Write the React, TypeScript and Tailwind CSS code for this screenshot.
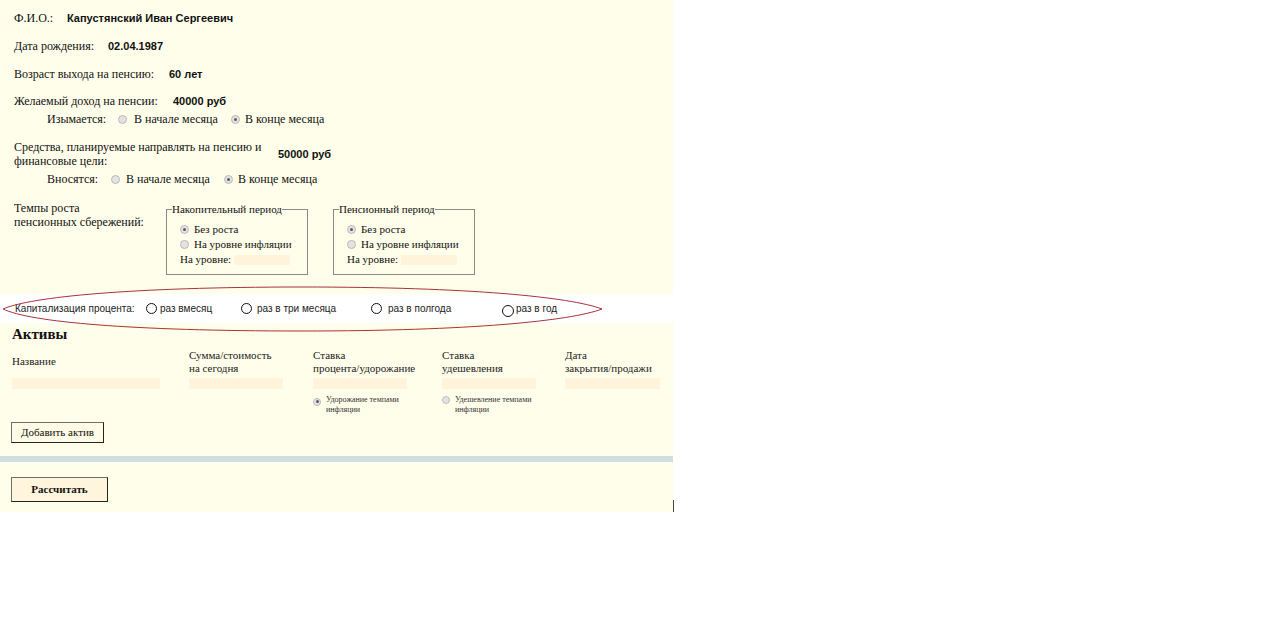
import React from "react";

const SERIF = "font-['Liberation_Serif','Times_New_Roman',serif]";
const SANS = "font-['Liberation_Sans',Arial,sans-serif]";

function Radio({ checked = false }: { checked?: boolean }) {
  return (
    <span className="inline-flex shrink-0 w-[9px] h-[9px] rounded-full border border-[#b9b9b9] bg-[#e3e3e3] items-center justify-center">
      {checked && <span className="w-[3px] h-[3px] rounded-full bg-[#5a5a5a]" />}
    </span>
  );
}

function SmallRadio({ checked = false }: { checked?: boolean }) {
  return (
    <span className="inline-flex shrink-0 w-[8px] h-[8px] rounded-full border border-[#bcbcbc] bg-[#e3e3e3] items-center justify-center">
      {checked && <span className="w-[3px] h-[3px] rounded-full bg-[#5a5a5a]" />}
    </span>
  );
}

function CapRadio({ big = false }: { big?: boolean }) {
  return big ? (
    <span className="shrink-0 w-[12px] h-[12px] mt-[4px] rounded-full border border-[#111] bg-white" />
  ) : (
    <span className="shrink-0 w-[11px] h-[11px] rounded-full border border-[#111] bg-white" />
  );
}

function Period({ title }: { title: string }) {
  return (
    <fieldset className="w-[142px] mt-[2px] border border-[#8a8a8a] pl-[5px] pb-[7px] text-[11px] leading-[13px]">
      <legend className="p-0">{title}</legend>
      <div className="ml-[8px] pt-[6px]">
        <div className="flex items-center h-[15px]">
          <Radio checked />
          <span className="ml-[5px]">Без роста</span>
        </div>
        <div className="flex items-center h-[15px]">
          <Radio />
          <span className="ml-[5px]">На уровне инфляции</span>
        </div>
        <div className="flex items-center h-[15px]">
          <span className="w-[54px]">На уровне:</span>
          <span className="w-[56px] h-[10px] bg-[#fff3dc]" />
        </div>
      </div>
    </fieldset>
  );
}

export default function App() {
  return (
    <div className={`relative w-[1280px] h-[632px] bg-white text-[#111] ${SERIF}`}>
      {/* top section */}
      <div className="w-[673px] h-[294px] bg-[#fffeea] pt-[10px] pl-[14px] text-[12px] leading-[15px]">
        <div className="flex items-center h-[16px]">
          <span className="w-[53px]">Ф.И.О.:</span>
          <span className={`${SANS} font-bold text-[11px]`}>Капустянский Иван Сергеевич</span>
        </div>
        <div className="flex items-center h-[16px] mt-[12px]">
          <span className="w-[94px]">Дата рождения:</span>
          <span className={`${SANS} font-bold text-[11px]`}>02.04.1987</span>
        </div>
        <div className="flex items-center h-[16px] mt-[12px]">
          <span className="w-[155px]">Возраст выхода на пенсию:</span>
          <span className={`${SANS} font-bold text-[11px]`}>60 лет</span>
        </div>
        <div className="flex items-center h-[16px] mt-[11px]">
          <span className="w-[159px]">Желаемый доход на пенсии:</span>
          <span className={`${SANS} font-bold text-[11px]`}>40000 руб</span>
        </div>
        <div className="flex items-center h-[16px] mt-[2px] pl-[33px]">
          <span className="w-[71px]">Изымается:</span>
          <Radio />
          <span className="ml-[7px] w-[97px]">В начале месяца</span>
          <Radio checked />
          <span className="ml-[5px]">В конце месяца</span>
        </div>
        <div className="flex items-center h-[28px] mt-[13px]">
          <span className="w-[264px] leading-[14px] whitespace-nowrap">
            Средства, планируемые направлять на пенсию и
            <br />
            финансовые цели:
          </span>
          <span className={`${SANS} font-bold text-[11px]`}>50000 руб</span>
        </div>
        <div className="flex items-center h-[16px] mt-[3px] pl-[33px]">
          <span className="w-[64px]">Вносятся:</span>
          <Radio />
          <span className="ml-[6px] w-[98px]">В начале месяца</span>
          <Radio checked />
          <span className="ml-[5px]">В конце месяца</span>
        </div>
        <div className="flex items-start mt-[14px]">
          <span className="w-[152px] leading-[14px]">
            Темпы роста
            <br />
            пенсионных сбережений:
          </span>
          <Period title="Накопительный период" />
          <div className="w-[25px]" />
          <Period title="Пенсионный период" />
        </div>
      </div>

      {/* capitalization strip */}
      <div className={`flex items-center h-[29px] w-[680px] bg-white pl-[15px] text-[10px] text-[#222] ${SANS}`}>
        <span className="w-[131px]">Капитализация процента:</span>
        <CapRadio />
        <span className="ml-[3px] w-[81px]">раз вмесяц</span>
        <CapRadio />
        <span className="ml-[5px] w-[114px]">раз в три месяца</span>
        <CapRadio />
        <span className="ml-[6px] w-[114px]">раз в полгода</span>
        <CapRadio big />
        <span className="ml-[2px]">раз в год</span>
      </div>

      {/* assets section */}
      <div className="flex">
        <div className="w-[673px] h-[189px] bg-[#fffeea] pt-[4px]">
          <div className="pl-[12px] h-[15px] text-[15px] leading-[15px] font-bold">Активы</div>
          <div className="flex items-center h-[27px] mt-[6px] pl-[12px] text-[11px] leading-[13px] text-[#222]">
            <span className="w-[177px]">Название</span>
            <span className="w-[124px]">
              Сумма/стоимость
              <br />
              на сегодня
            </span>
            <span className="w-[129px]">
              Ставка
              <br />
              процента/удорожание
            </span>
            <span className="w-[123px]">
              Ставка
              <br />
              удешевления
            </span>
            <span>
              Дата
              <br />
              закрытия/продажи
            </span>
          </div>
          <div className="flex h-[11px] mt-[3px] pl-[12px]">
            <span className="w-[148px] bg-[#fff3dc]" />
            <span className="w-[94px] ml-[29px] bg-[#fff3dc]" />
            <span className="w-[94px] ml-[30px] bg-[#fff3dc]" />
            <span className="w-[94px] ml-[35px] bg-[#fff3dc]" />
            <span className="w-[95px] ml-[29px] bg-[#fff3dc]" />
          </div>
          <div className="flex mt-[6px] pl-[313px] text-[8px] leading-[10px] text-[#333]">
            <div className="flex items-start w-[129px]">
              <span className="mt-[1px]">
                <SmallRadio checked />
              </span>
              <span className="ml-[5px]">
                Удорожание темпами
                <br />
                инфляции
              </span>
            </div>
            <div className="flex items-start">
              <span className="mt-[1px]">
                <SmallRadio />
              </span>
              <span className="ml-[5px]">
                Удешевление темпами
                <br />
                инфляции
              </span>
            </div>
          </div>
          <div className="pl-[11px] mt-[4px]">
            <button className="w-[93px] h-[21px] border border-[#6e6e6e] border-b-[#222] border-r-[#222] bg-[#fffbe6] text-[11px] text-[#111]">
              Добавить актив
            </button>
          </div>
          <div className="h-[6px] mt-[13px] bg-[#cfdfe1]" />
          <div className="mt-[14px] pl-[11px]">
            <button className="w-[97px] h-[25px] border border-[#6e6e6e] border-b-[#222] border-r-[#222] bg-[#fff4dc] text-[11px] font-bold text-[#111]">
              Рассчитать
            </button>
          </div>
        </div>
        <span className="self-end w-px h-[12px] bg-[#444]" />
      </div>

      {/* hand-drawn ellipse over capitalization row */}
      <svg
        className="absolute left-0 top-0 pointer-events-none"
        width="680"
        height="340"
        viewBox="0 0 680 340"
      >
        <path
          d="M3,309 C30,297 130,287 302,287 C470,287 570,297 602,309 C570,321 470,331 302,331 C130,331 30,322 3,309 Z"
          fill="none"
          stroke="#a8323e"
          strokeWidth="1"
        />
      </svg>
    </div>
  );
}
